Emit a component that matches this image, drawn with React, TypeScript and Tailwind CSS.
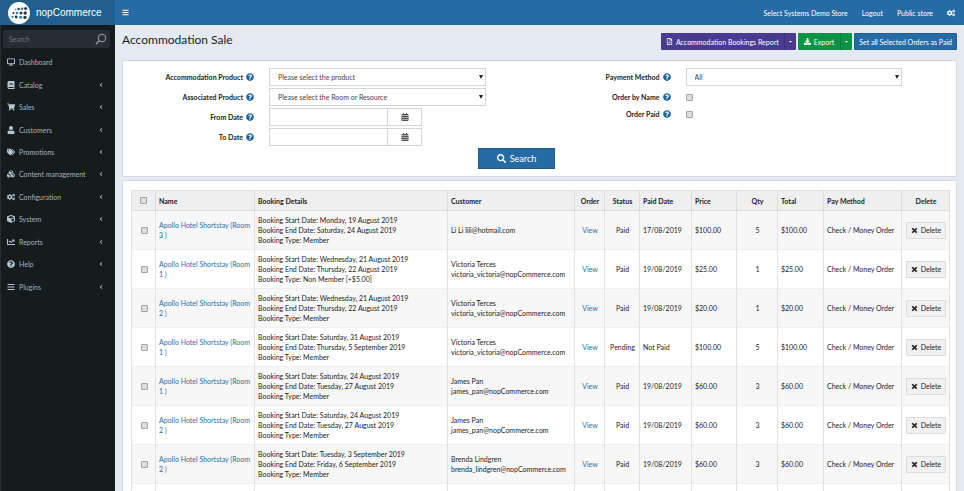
import type { ReactNode } from "react";
import type { IconType } from "react-icons";
import {
  FaAngleLeft,
  FaBars,
  FaBook,
  FaCalendarAlt,
  FaCaretDown,
  FaChartLine,
  FaCogs,
  FaCube,
  FaCubes,
  FaDesktop,
  FaDownload,
  FaQuestionCircle,
  FaRegFilePdf,
  FaSearch,
  FaShoppingCart,
  FaTags,
  FaTimes,
  FaUser,
} from "react-icons/fa";

type MenuItem = { label: string; icon: IconType; expandable: boolean };

const menu: MenuItem[] = [
  { label: "Dashboard", icon: FaDesktop, expandable: false },
  { label: "Catalog", icon: FaBook, expandable: true },
  { label: "Sales", icon: FaShoppingCart, expandable: true },
  { label: "Customers", icon: FaUser, expandable: true },
  { label: "Promotions", icon: FaTags, expandable: true },
  { label: "Content management", icon: FaCubes, expandable: true },
  { label: "Configuration", icon: FaCogs, expandable: true },
  { label: "System", icon: FaCube, expandable: true },
  { label: "Reports", icon: FaChartLine, expandable: true },
  { label: "Help", icon: FaQuestionCircle, expandable: true },
  { label: "Plugins", icon: FaBars, expandable: true },
];

type Booking = {
  room: number;
  start: string;
  end: string;
  type: string;
  customer: string[];
  status: string;
  paidDate: string;
  price: string;
  qty: number;
};

const victoria = ["Victoria Terces", "victoria_victoria@nopCommerce.com"];
const james = ["James Pan", "james_pan@nopCommerce.com"];

const bookings: Booking[] = [
  { room: 3, start: "Monday, 19 August 2019", end: "Saturday, 24 August 2019", type: "Member", customer: ["Li Li lili@hotmail.com"], status: "Paid", paidDate: "17/08/2019", price: "$100.00", qty: 5 },
  { room: 1, start: "Wednesday, 21 August 2019", end: "Thursday, 22 August 2019", type: "Non Member [+$5.00]", customer: victoria, status: "Paid", paidDate: "19/08/2019", price: "$25.00", qty: 1 },
  { room: 2, start: "Wednesday, 21 August 2019", end: "Thursday, 22 August 2019", type: "Member", customer: victoria, status: "Paid", paidDate: "19/08/2019", price: "$20.00", qty: 1 },
  { room: 1, start: "Saturday, 31 August 2019", end: "Thursday, 5 September 2019", type: "Member", customer: victoria, status: "Pending", paidDate: "Not Paid", price: "$100.00", qty: 5 },
  { room: 1, start: "Saturday, 24 August 2019", end: "Tuesday, 27 August 2019", type: "Member", customer: james, status: "Paid", paidDate: "19/08/2019", price: "$60.00", qty: 3 },
  { room: 2, start: "Saturday, 24 August 2019", end: "Tuesday, 27 August 2019", type: "Member", customer: james, status: "Paid", paidDate: "19/08/2019", price: "$60.00", qty: 3 },
  { room: 2, start: "Tuesday, 3 September 2019", end: "Friday, 6 September 2019", type: "Member", customer: ["Brenda Lindgren", "brenda_lindgren@nopCommerce.com"], status: "Paid", paidDate: "19/08/2019", price: "$60.00", qty: 3 },
];

const columns = [
  { label: "Name", width: "w-[99px]", align: "text-left" },
  { label: "Booking Details", width: "w-[193px]", align: "text-left" },
  { label: "Customer", width: "w-[127px]", align: "text-left" },
  { label: "Order", width: "w-[30px]", align: "text-center" },
  { label: "Status", width: "w-[35px]", align: "text-center" },
  { label: "Paid Date", width: "w-[52px]", align: "text-left" },
  { label: "Price", width: "w-[45px]", align: "text-left" },
  { label: "Qty", width: "w-[41px]", align: "text-center" },
  { label: "Total", width: "w-[46px]", align: "text-left" },
  { label: "Pay Method", width: "w-[78px]", align: "text-left" },
  { label: "Delete", width: "w-[48px]", align: "text-center" },
];

function Logo() {
  const dots: [number, number, number, string][] = [
    [7.4, 7.4, 1, "#7fa9c9"], [10.6, 7, 1.2, "#31383d"], [14, 6.8, 1.4, "#2a7fc0"], [17.6, 6.6, 1.5, "#31383d"],
    [5.4, 11, 1.1, "#31383d"], [9, 11, 1.3, "#2a7fc0"], [13, 11, 1.5, "#31383d"], [17.2, 11, 1.7, "#31383d"],
    [4.6, 14.8, 1.1, "#2a7fc0"], [8.2, 15, 1.4, "#31383d"], [12.6, 15.2, 1.5, "#2a7fc0"], [17, 15.4, 1.7, "#31383d"],
  ];
  return (
    <svg aria-hidden="true" viewBox="0 0 22 22" className="size-[22px] shrink-0">
      <circle cx="11" cy="11" r="11" fill="#fff" />
      {dots.map(([x, y, r, color]) => (
        <circle key={`${x}-${y}`} cx={x} cy={y} r={r} fill={color} />
      ))}
    </svg>
  );
}

function Checkbox({ id, label }: { id?: string; label?: string }) {
  return (
    <input
      id={id}
      type="checkbox"
      aria-label={label}
      className="block size-[7px] appearance-none rounded-[1px] border border-[#a3a3a3] bg-[#dedede] checked:bg-[#256ca7]"
    />
  );
}

function Field({ id, label, short, children }: { id: string; label: string; short?: boolean; children: ReactNode }) {
  return (
    <div className={`grid grid-cols-[131px_1fr] items-center gap-[15px] pr-[54px] ${short ? "h-3" : "h-[18px]"}`}>
      <label htmlFor={id} className="flex items-center justify-end gap-[3px] font-bold whitespace-nowrap text-[#222]">
        {label}
        <FaQuestionCircle className="size-2 text-[#1d639c]" />
      </label>
      {children}
    </div>
  );
}

function Select({ id, value }: { id: string; value: string }) {
  return (
    <div className="relative">
      <select
        id={id}
        className="block h-[18px] w-full appearance-none border border-[#d2d4da] bg-white px-2 text-[#444]"
      >
        <option>{value}</option>
      </select>
      <svg
        aria-hidden="true"
        viewBox="0 0 4 4"
        className="pointer-events-none absolute top-[7px] right-[3px] size-1 fill-[#222]"
      >
        <path d="M0 0h4L2 4z" />
      </svg>
    </div>
  );
}

function DateInput({ id, label }: { id: string; label: string }) {
  return (
    <div className="flex h-[18px] w-[153px]">
      <input id={id} type="text" className="min-w-0 flex-1 border border-[#d2d4da] bg-white px-2" />
      <button
        type="button"
        aria-label={`Pick ${label}`}
        className="flex w-[34px] items-center justify-center border border-l-0 border-[#d2d4da] bg-white"
      >
        <FaCalendarAlt className="size-2 text-[#555]" />
      </button>
    </div>
  );
}

function Sidebar() {
  return (
    <aside className="w-[115px] shrink-0 border-l border-[#262d31] bg-[#161b1e] text-[#a3b4bd]">
      <form role="search" className="mx-[2px] mt-[5px] mr-[5px] flex h-[18px] items-center rounded-[2px] bg-[#272e32] px-[6px]">
        <input
          type="text"
          aria-label="Search"
          placeholder="Search"
          className="min-w-0 flex-1 bg-transparent outline-none placeholder:text-[#6f777b]"
        />
        <svg aria-hidden="true" viewBox="0 0 12 12" className="-mr-[3px] size-3" fill="none" stroke="#96a0a5">
          <circle cx="7" cy="5" r="3.8" />
          <path d="M4.2 7.8 1 11" strokeWidth="1.4" />
        </svg>
      </form>
      <nav className="mt-[3px] grid h-[247px] auto-rows-fr">
        {menu.map(({ label, icon: Icon, expandable }) => (
          <a key={label} href="#" className="flex items-center pr-[11px] pl-[6px] hover:text-white">
            <Icon className="mr-1 size-2 text-[#b8c7ce]" />
            <span className="flex-1 whitespace-nowrap">{label}</span>
            {expandable ? <FaAngleLeft className="size-[6px]" /> : null}
          </a>
        ))}
      </nav>
    </aside>
  );
}

function BookingTable() {
  return (
    <table className="w-full table-fixed border-collapse border border-[#e0e0e0] text-[#222]">
      <colgroup>
        <col className="w-[24px]" />
        {columns.map((column) => (
          <col key={column.label} className={column.width} />
        ))}
      </colgroup>
      <thead>
        <tr className="h-5 border-b border-[#dcdcdc] bg-[#efefef]">
          <th className="border-r border-[#dcdcdc]">
            <span className="flex justify-center">
              <Checkbox label="Select all orders" />
            </span>
          </th>
          {columns.map((column) => (
            <th key={column.label} className={`border-r border-[#dcdcdc] pr-[2px] pl-[3px] font-bold whitespace-nowrap ${column.align}`}>
              {column.label}
            </th>
          ))}
        </tr>
      </thead>
      <tbody className="[&_td]:border-r [&_td]:border-[#e2e2e2] [&_td]:pr-[2px] [&_td]:pl-[3px]">
        {bookings.map((booking, index) => (
          <tr key={index} className="h-[39px] border-b border-[#f0f0f0] odd:bg-[#f7f7f7]">
            <td>
              <span className="flex justify-center">
                <Checkbox label={`Select order ${index + 1}`} />
              </span>
            </td>
            <td>
              <a href="#" className="block text-[#2a6f9f]">
                {`Apollo Hotel Shortstay (Room ${booking.room} )`}
              </a>
            </td>
            <td>
              <div>{`Booking Start Date: ${booking.start}`}</div>
              <div>{`Booking End Date: ${booking.end}`}</div>
              <div>{`Booking Type: ${booking.type}`}</div>
            </td>
            <td>
              {booking.customer.map((line) => (
                <div key={line}>{line}</div>
              ))}
            </td>
            <td className="text-center">
              <a href="#" className="text-[#2a6f9f]">View</a>
            </td>
            <td className="text-center">{booking.status}</td>
            <td>{booking.paidDate}</td>
            <td>{booking.price}</td>
            <td className="text-center">{booking.qty}</td>
            <td>{booking.price}</td>
            <td className="whitespace-nowrap">Check / Money Order</td>
            <td>
              <button
                type="button"
                className="mx-auto flex h-[17px] w-10 items-center justify-center gap-[3px] rounded-[1px] border border-[#dcdcdc] bg-[#f1f1f1]"
              >
                <FaTimes className="size-[7px] stroke-current stroke-[40px]" />
                Delete
              </button>
            </td>
          </tr>
        ))}
        <tr className="h-[39px]">
          {["select", ...columns.map((column) => column.label)].map((key) => (
            <td key={key} />
          ))}
        </tr>
      </tbody>
    </table>
  );
}

export default function App() {
  return (
    <div className="flex h-screen flex-col overflow-hidden bg-[#e5e9f1] font-['Lato','Noto_Sans',sans-serif] text-[7px] leading-[10px]">
      <header className="flex h-[25px] shrink-0 bg-[#256ca7] text-white">
        <a href="#" className="flex w-[115px] shrink-0 items-center gap-[6px] bg-[#225f8e] pl-2 font-['Liberation_Sans',sans-serif] text-[10px]">
          <Logo />
          nopCommerce
        </a>
        <button type="button" aria-label="Toggle menu" className="px-[7px]">
          <FaBars className="size-[7px]" />
        </button>
        <nav className="ml-auto flex items-center gap-[14px] pr-[9px]">
          <span>Select Systems Demo Store</span>
          <a href="#">Logout</a>
          <a href="#">Public store</a>
          <button type="button" aria-label="Settings">
            <FaCogs className="size-2" />
          </button>
        </nav>
      </header>

      <div className="flex min-h-0 flex-1">
        <Sidebar />
        <main className="min-w-0 flex-1 px-[7px]">
          <div className="flex h-[35px] items-start justify-between pt-2">
            <h1 className="text-[12px] leading-[14px] text-[#222]">Accommodation Sale</h1>
            <div className="flex h-[17px] gap-[2px] text-white">
              <div className="flex rounded-[1px] bg-[#493b8f]">
                <button type="button" className="flex items-center gap-[3px] px-[5px]">
                  <FaRegFilePdf className="size-[7px]" />
                  Accommodation Bookings Report
                </button>
                <button type="button" aria-label="More reports" className="w-3 border-l border-[#3c3079] px-[3px]">
                  <FaCaretDown className="size-[5px]" />
                </button>
              </div>
              <div className="flex rounded-[1px] bg-[#0b9444]">
                <button type="button" className="flex items-center gap-[3px] px-[6px]">
                  <FaDownload className="size-[7px]" />
                  Export
                </button>
                <button type="button" aria-label="More export options" className="w-3 border-l border-[#087a37] px-[3px]">
                  <FaCaretDown className="size-[5px]" />
                </button>
              </div>
              <button type="button" className="rounded-[1px] border border-[#215f93] bg-[#256ca7] px-1">
                Set all Selected Orders as Paid
              </button>
            </div>
          </div>

          <form className="rounded-[2px] border border-[#d4d8e0] bg-white pt-[7px] pb-[7px]">
            <div className="grid grid-cols-2">
              <div className="grid content-start gap-[2px]">
                <Field id="product" label="Accommodation Product">
                  <Select id="product" value="Please select the product" />
                </Field>
                <Field id="associated" label="Associated Product">
                  <Select id="associated" value="Please select the Room or Resource" />
                </Field>
                <Field id="from" label="From Date">
                  <DateInput id="from" label="from date" />
                </Field>
                <Field id="to" label="To Date">
                  <DateInput id="to" label="to date" />
                </Field>
              </div>
              <div className="grid content-start gap-[2px]">
                <Field id="payment" label="Payment Method">
                  <Select id="payment" value="All" />
                </Field>
                <Field id="byName" label="Order by Name">
                  <Checkbox id="byName" />
                </Field>
                <Field id="paid" label="Order Paid" short>
                  <Checkbox id="paid" />
                </Field>
              </div>
            </div>
            <div className="flex justify-center pt-[2px] pr-[46px]">
              <button
                type="button"
                className="flex h-[21px] w-[77px] items-center justify-center gap-1 border border-[#1f5c90] bg-[#256ca7] text-[9px] text-white"
              >
                <FaSearch className="size-[9px]" />
                Search
              </button>
            </div>
          </form>

          <section className="mt-[3px] rounded-[2px] border border-[#d4d8e0] bg-white px-2 pt-[9px]">
            <BookingTable />
          </section>
        </main>
      </div>
    </div>
  );
}
